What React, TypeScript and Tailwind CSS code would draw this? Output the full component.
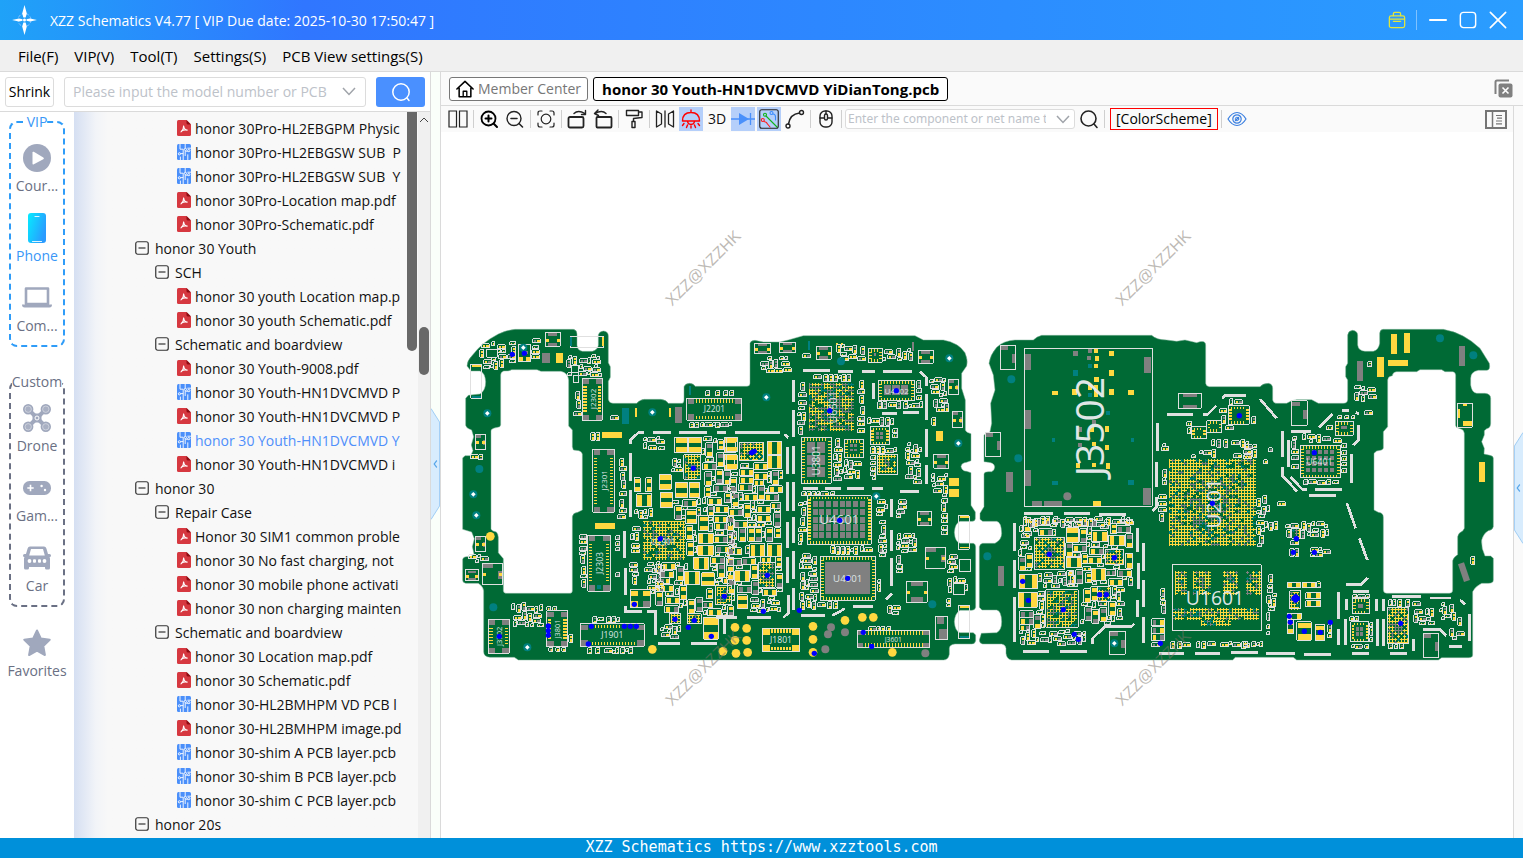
import { useState, type ReactNode } from "react";

type Box = [number, number, number, number];
type Pt = [number, number];

const GREEN = "#006a35";
const YELLOW = "#ffd840";
const GRAY = "#808080";
const TEAL = "#008080";
const SILK = "#e0e0e0";

function makeRandom(seed: number) {
  let s = seed;
  return () => {
    s = (s * 1664525 + 1013904223) % 4294967296;
    return s / 4294967296;
  };
}

const hits = (a: Box, b: Box) =>
  a[0] < b[0] + b[2] && b[0] < a[0] + a[2] && a[1] < b[1] + b[3] && b[1] < a[1] + a[3];

const rectPath = (x: number, y: number, w: number, h: number) => `M${x} ${y}h${w}v${h}h${-w}z`;

/** Fills the given regions with small two-terminal parts that never overlap. */
function packParts(regions: Box[], blocked: Box[], sizes: Pt[], seed: number, tries: number) {
  const rnd = makeRandom(seed);
  const placed: Box[] = [];
  let outline = "";
  let yellow = "";
  let gray = "";
  for (const [rx, ry, rw, rh] of regions) {
    const count = Math.max(40, Math.round((rw * rh * tries) / 1000));
    for (let i = 0; i < count; i++) {
      const size = sizes[Math.min(sizes.length - 1, Math.floor((i / count) * sizes.length))];
      const vertical = rnd() > 0.5;
      let w = vertical ? size[0] : size[1];
      let h = vertical ? size[1] : size[0];
      w = Math.min(w, Math.max(8, rw));
      h = Math.min(h, Math.max(8, rh));
      const x = Math.round((rx + rnd() * Math.max(0, rw - w)) / 3) * 3;
      const y = Math.round((ry + rnd() * Math.max(0, rh - h)) / 3) * 3;
      const b: Box = [x, y, w, h];
      if (blocked.some((o) => hits(b, o)) || placed.some((o) => hits([x - 1, y - 1, w + 2, h + 2], o))) continue;
      placed.push(b);
      outline += rectPath(x, y, w, h);
      const tone = rnd();
      const t = Math.max(3, Math.round(Math.max(w, h) * 0.3));
      const a = w >= h ? rectPath(x + 2, y + 2, t, h - 4) : rectPath(x + 2, y + 2, w - 4, t);
      const z = w >= h ? rectPath(x + w - t - 2, y + 2, t, h - 4) : rectPath(x + 2, y + h - t - 2, w - 4, t);
      if (tone < 0.36) yellow += a + z;
      else if (tone < 0.66) {
        yellow += a;
        gray += z;
      } else if (tone < 0.92) {
        gray += a;
        yellow += z;
      } else gray += a + z;
    }
  }
  return (
    <g>
      <path d={yellow} fill={YELLOW} />
      <path d={gray} fill={GRAY} />
      <path d={outline} fill="none" stroke={SILK} strokeWidth={3} />
    </g>
  );
}

/** Ball grid array drawn as touching plus marks. */
function BallGrid({
  box,
  seed,
  fill = 0.92,
  share = 0.78,
  outline = false,
}: {
  box: Box;
  seed: number;
  fill?: number;
  share?: number;
  outline?: boolean;
}) {
  const rnd = makeRandom(seed);
  const d = ["", "", ""];
  const [x0, y0, w, h] = box;
  for (let y = y0 + 6; y < y0 + h - 2; y += 9)
    for (let x = x0 + 6; x < x0 + w - 2; x += 9) {
      const mid = Math.abs(x - x0 - w / 2) < w * 0.25 && Math.abs(y - y0 - h / 2) < h * 0.25;
      if (rnd() > fill) continue;
      const r = rnd();
      const k = r < (mid ? share - 0.22 : share) ? 0 : r < 0.92 ? 1 : 2;
      d[k] += `M${x - 4} ${y}h9M${x} ${y - 4}v9`;
    }
  return (
    <g fill="none" strokeWidth={3}>
      <path d={d[2]} stroke={TEAL} />
      <path d={d[1]} stroke={GRAY} />
      <path d={d[0]} stroke={YELLOW} />
      {outline && <path d={rectPath(x0, y0, w, h)} stroke={SILK} />}
    </g>
  );
}

/** Package with perimeter pins and an optional array of ground pads. */
function Chip({ box, cols = 0, rows = 0, solid = false }: { box: Box; cols?: number; rows?: number; solid?: boolean }) {
  const [x, y, w, h] = box;
  let pins = "";
  for (let i = x + 10; i < x + w - 8; i += 9) pins += `M${i} ${y + 2}v8M${i} ${y + h - 10}v8`;
  for (let i = y + 12; i < y + h - 10; i += 9) pins += `M${x + 2} ${i}h8M${x + w - 10} ${i}h8`;
  let pads = "";
  if (solid) pads = rectPath(x + 15, y + 18, w - 32, h - 36);
  else if (cols) {
    const cw = (w - 30) / cols;
    const ch = (h - 28) / rows;
    for (let r = 0; r < rows; r++)
      for (let c = 0; c < cols; c++) pads += rectPath(x + 16 + c * cw, y + 15 + r * ch, cw - 5, ch - 5);
  }
  return (
    <g fill="none" strokeWidth={3}>
      <path d={pads} fill={GRAY} />
      <path d={pins} stroke={YELLOW} strokeWidth={4} />
      <path d={rectPath(x, y, w, h)} stroke={SILK} />
    </g>
  );
}

function Connector({ box, wide, bright }: { box: Box; wide?: boolean; bright?: boolean }) {
  const [x, y, w, h] = box;
  const c = Math.round(Math.min(w, h) * 0.3);
  let pins = "";
  if (wide) for (let i = x + c + 8; i < x + w - c - 4; i += 9) pins += `M${i} ${y + 3}v10M${i} ${y + h - 13}v10`;
  else for (let i = y + c + 8; i < y + h - c - 4; i += 9) pins += `M${x + 3} ${i}h10M${x + w - 13} ${i}h10`;
  const corners =
    rectPath(x + 2, y + 2, c, c * 0.8) +
    rectPath(x + w - c - 2, y + 2, c, c * 0.8) +
    rectPath(x + 2, y + h - c * 0.8 - 2, c, c * 0.8) +
    rectPath(x + w - c - 2, y + h - c * 0.8 - 2, c, c * 0.8);
  return (
    <g fill="none" strokeWidth={3}>
      <path d={corners} fill={bright ? YELLOW : GRAY} />
      <path d={pins} stroke={YELLOW} strokeWidth={bright ? 6 : 4} />
      <path d={rectPath(x, y, w, h)} stroke={SILK} />
    </g>
  );
}

function Capacitor({ box }: { box: Box }) {
  const [x, y, w, h] = box;
  const d =
    w > h
      ? rectPath(x + 2, y + 2, w * 0.28, h - 4) + rectPath(x + w * 0.72 - 2, y + 2, w * 0.28, h - 4)
      : rectPath(x + 2, y + 2, w - 4, h * 0.3) + rectPath(x + 2, y + h * 0.7 - 2, w - 4, h * 0.3);
  return (
    <g>
      <path d={d} fill={YELLOW} />
      <path d={rectPath(x, y, w, h)} fill="none" stroke={SILK} strokeWidth={3} />
    </g>
  );
}

function Holder({ box, plain }: { box: Box; plain?: boolean }) {
  const [x, y, w, h] = box;
  const pads =
    w >= h
      ? rectPath(x + w * 0.2, y + 2, w * 0.6, h * 0.2) + rectPath(x + w * 0.2, y + h * 0.8 - 2, w * 0.6, h * 0.2)
      : rectPath(x + 2, y + 2, w * 0.5, h * 0.18) + rectPath(x + w - w * 0.2 - 2, y + h * 0.36, w * 0.2, h * 0.36);
  const marks = rectPath(x + 2, y + h * 0.45, 8, 9) + rectPath(x + w - 10, y + h * 0.45, 8, 9);
  return (
    <g>
      <path d={pads} fill={GRAY} />
      {!plain && <path d={marks} fill={YELLOW} />}
      <path d={rectPath(x, y, w, h)} fill="none" stroke={SILK} strokeWidth={3} />
    </g>
  );
}

type Section = {
  seed: number;
  plainHolders?: boolean;
  holders?: Box[];
  frames?: Box[];
  yellow?: Box[];
  gray?: Box[];
  teal?: Box[];
  caps?: Box[];
  grids?: Box[];
  connectors?: { box: Box; wide?: boolean; bright?: boolean }[];
  chips?: { box: Box; cols?: number; rows?: number; solid?: boolean }[];
  silk: string;
  tealDots?: Pt[];
  starDots?: Pt[];
  yellowDots?: Pt[];
  grayDots?: Pt[];
  blueDots: Pt[];
  tiny: Box[];
  dense?: Box[];
  labels?: { text: string; at: Pt; size: number; rotate?: boolean }[];
};

const boxesPath = (b: Box[] = []) => b.map((r) => rectPath(...r)).join("");

function BoardSection({ s }: { s: Section }) {
  const blocked: Box[] = [
    ...(s.holders ?? []),
    ...(s.frames ?? []),
    ...(s.caps ?? []),
    ...(s.grids ?? []),
    ...(s.yellow ?? []),
    ...(s.gray ?? []),
    ...(s.connectors ?? []).map((c) => c.box),
    ...(s.chips ?? []).map((c) => c.box),
  ];
  return (
    <g>
      <g shapeRendering="crispEdges">
        <path d={boxesPath(s.gray)} fill={GRAY} />
        <path d={boxesPath(s.teal)} fill={TEAL} />
        <path d={boxesPath(s.yellow)} fill={YELLOW} />
        <path d={boxesPath(s.frames)} fill="none" stroke={SILK} strokeWidth={3} />
        {s.holders?.map((b, i) => <Holder key={i} box={b} plain={s.plainHolders} />)}
        {s.caps?.map((b, i) => <Capacitor key={i} box={b} />)}
        {s.connectors?.map((c, i) => <Connector key={i} {...c} />)}
        {s.chips?.map((c, i) => <Chip key={i} {...c} />)}
        {s.grids?.map((b, i) => (
          <BallGrid key={i} box={b} seed={s.seed + i} outline={b[2] < 120} share={b[2] > 140 && b[2] < 200 ? 0.58 : 0.78} />
        ))}
        {packParts(s.dense ?? [], blocked, [[20, 40], [16, 30], [12, 24], [9, 18], [9, 12]], s.seed, 45)}
        {packParts(s.tiny, blocked, [[12, 22], [9, 18], [9, 12], [8, 9]], s.seed + 7, 50)}
        <path d={s.silk} fill="none" stroke={SILK} strokeWidth={8} />
      </g>
      {s.tealDots?.map(([x, y], i) => <circle key={i} cx={x} cy={y} r={12} fill={TEAL} />)}
      {s.starDots?.map(([x, y], i) => (
        <g key={i}>
          <circle cx={x} cy={y} r={12} fill={TEAL} />
          <path d={`M${x} ${y - 7}l7 7l-7 7l-7 -7z`} fill="#fff" />
        </g>
      ))}
      {s.yellowDots?.map(([x, y], i) => <circle key={i} cx={x} cy={y} r={13} fill={YELLOW} />)}
      {s.grayDots?.map(([x, y], i) => <circle key={i} cx={x} cy={y} r={12} fill={GRAY} />)}
      {s.labels?.map(({ text, at, size, rotate }, i) => (
        <text
          key={i}
          fontSize={size}
          fill="#dfe6e6"
          textAnchor="middle"
          dominantBaseline="central"
          transform={`translate(${at[0]} ${at[1]})${rotate ? " rotate(-90)" : ""}`}
        >
          {text}
        </text>
      ))}
      {s.blueDots.map(([x, y], i) => <circle key={i} cx={x} cy={y} r={8} fill="#0000ff" />)}
    </g>
  );
}

const frontLeft: Section = {
  seed: 11,
  holders: [[271, 37, 45, 42], [61, 343, 31, 45], [61, 649, 31, 45], [31, 750, 40, 32], [82, 730, 60, 64]],
  frames: [[190, 73, 37, 52], [95, 88, 32, 24], [349, 138, 22, 20], [356, 166, 16, 22], [526, 810, 60, 52]],
  yellow: [[303, 99, 20, 29], [441, 336, 60, 18], [420, 609, 60, 18], [540, 263, 6, 28], [642, 263, 6, 28], [441, 52, 6, 27], [192, 112, 12, 12], [212, 112, 12, 12], [528, 812, 20, 16], [564, 812, 20, 16], [528, 842, 20, 18], [51, 135, 27, 6]],
  gray: [[261, 99, 24, 29], [660, 261, 21, 47], [200, 92, 18, 10], [564, 842, 20, 18]],
  teal: [[500, 263, 22, 48], [346, 52, 5, 26], [701, 197, 6, 28], [426, 795, 12, 12], [51, 228, 27, 6]],
  caps: [[660, 352, 38, 46], [701, 352, 38, 46], [808, 352, 34, 46], [613, 464, 36, 44], [545, 522, 45, 38], [616, 518, 37, 44], [661, 488, 37, 46], [703, 488, 31, 46], [808, 404, 30, 46], [693, 570, 32, 42], [732, 588, 28, 44], [730, 640, 45, 30], [728, 676, 47, 30], [716, 712, 45, 36], [688, 755, 46, 40], [740, 758, 38, 40], [746, 892, 44, 66], [538, 474, 18, 42], [573, 474, 18, 42]],
  grids: [[562, 600, 128, 120], [687, 404, 50, 74], [783, 798, 47, 56], [645, 880, 32, 32], [697, 882, 42, 30]],
  connectors: [
    { box: [382, 175, 60, 126] },
    { box: [696, 235, 165, 66], wide: true },
    { box: [414, 388, 64, 189] },
    { box: [399, 646, 67, 168] },
    { box: [100, 898, 63, 102] },
    { box: [275, 873, 63, 107] },
    { box: [376, 912, 192, 67], wide: true },
  ],
  silk: "M527 372V360L550 338H567M595 338H648M672 338H755M785 338H812M527 400V482M527 510V592M509 634V715M512 745V825M512 858V874H560M575 874H602V944M608 970H675M708 970H785M808 893V942",
  tealDots: [[73, 447], [115, 862]],
  starDots: [[97, 280], [592, 277], [55, 523], [64, 586], [217, 982], [205, 83]],
  yellowDots: [[106, 649], [592, 988], [804, 994]],
  blueDots: [[172, 103], [208, 100], [715, 445], [616, 656], [538, 853], [660, 898], [718, 901], [808, 829], [700, 922], [769, 949], [133, 949], [409, 919], [508, 919], [526, 919], [544, 919], [400, 972], [280, 918], [280, 932], [280, 946]],
  tiny: [[75, 65, 80, 85], [160, 65, 25, 65], [230, 55, 28, 70], [334, 105, 105, 68], [358, 205, 22, 85], [494, 415, 20, 170], [376, 632, 20, 180], [484, 640, 12, 55], [484, 750, 12, 25], [172, 850, 95, 72], [275, 860, 40, 10], [280, 985, 55, 10], [342, 935, 20, 40], [412, 890, 85, 18], [388, 985, 155, 18], [745, 213, 95, 14], [700, 308, 130, 14], [400, 335, 35, 32], [48, 405, 38, 15], [30, 705, 70, 22], [468, 283, 24, 22], [486, 545, 28, 60], [565, 350, 65, 40], [528, 620, 32, 90], [525, 725, 28, 75], [570, 725, 60, 100], [540, 565, 60, 32], [618, 915, 62, 42], [650, 415, 32, 55]],
  dense: [[742, 350, 98, 540], [650, 530, 90, 68], [692, 600, 50, 110], [600, 725, 100, 140], [620, 835, 130, 45]],
  labels: [
    { text: "J2302", at: [414, 237], size: 24, rotate: true },
    { text: "J2201", at: [778, 267], size: 25 },
    { text: "J2301", at: [447, 481], size: 24, rotate: true },
    { text: "J2303", at: [434, 729], size: 26, rotate: true },
    { text: "J3702", at: [132, 949], size: 23, rotate: true },
    { text: "J3801", at: [306, 927], size: 22, rotate: true },
    { text: "J1901", at: [472, 945], size: 26 },
    { text: "U2901", at: [624, 664], size: 25 },
  ],
};

const frontRight: Section = {
  seed: 37,
  holders: [[73, 70, 48, 31], [148, 67, 48, 31], [259, 79, 45, 39], [565, 91, 45, 39], [655, 178, 31, 45], [667, 275, 31, 47], [611, 403, 45, 42], [562, 574, 43, 42], [586, 682, 60, 63], [529, 784, 63, 63]],
  frames: [[616, 889, 37, 70], [688, 720, 35, 35], [670, 790, 35, 35]],
  yellow: [[617, 334, 21, 28], [656, 475, 31, 23], [656, 508, 31, 23], [690, 588, 26, 5], [690, 680, 26, 5], [690, 858, 26, 5], [318, 69, 6, 6], [332, 69, 6, 6]],
  gray: [[546, 66, 6, 27], [621, 892, 20, 20], [626, 926, 24, 30]],
  teal: [[234, 64, 6, 26], [690, 948, 26, 6]],
  caps: [[112, 364, 44, 40], [112, 406, 44, 40], [-10, 352, 32, 44], [-10, 404, 32, 44], [60, 672, 44, 38], [112, 672, 44, 38], [14, 752, 46, 32], [22, 825, 30, 42]],
  grids: [[234, 188, 142, 152], [443, 404, 60, 60], [28, 367, 73, 55], [86, 727, 50, 75]],
  connectors: [{ box: [97, 925, 112, 69], wide: true, bright: true }, { box: [382, 931, 216, 52], wide: true }],
  chips: [
    { box: [445, 181, 109, 62], cols: 3, rows: 1 },
    { box: [214, 352, 90, 138], cols: 2, rows: 3 },
    { box: [343, 358, 58, 54], cols: 2, rows: 2 },
    { box: [421, 321, 58, 54], cols: 2, rows: 2 },
    { box: [415, 85, 42, 42], cols: 1, rows: 1 },
    { box: [232, 528, 192, 145], cols: 8, rows: 5 },
    { box: [271, 709, 165, 132], solid: true },
  ],
  silk: "M219 152H300M325 155H368M397 155H435M460 155H547M570 155L589 172V197M190 180V246M190 270V352M190 378V463M190 485V572M190 590V670M190 694V777M190 804V870M173 382V463M173 485V572M173 605V685M173 712V790M176 825V878L160 893M14 338H150M163 343L175 353M431 190V238M589 222V300M589 327V412M589 436V492M455 281H500M520 277H567M220 505H265M285 505H332M352 505H403M427 505H460M510 514H567M484 538V590M484 630V692M484 714V797M468 838L487 821M370 859H430M212 886H285M307 886L345 866M50 892H122M-42 892H22",
  tealDots: [[333, 124], [607, 853]],
  starDots: [[658, 115], [109, 232], [685, 370], [439, 529]],
  yellowDots: [[15, 922], [50, 925], [15, 961], [50, 961], [18, 1000], [53, 997], [249, 919], [249, 958], [249, 997], [345, 901], [397, 892], [430, 892], [487, 997]],
  grayDots: [[303, 922], [294, 943], [345, 937], [286, 988], [586, 1000]],
  blueDots: [[299, 272], [499, 212], [329, 601], [353, 775], [65, 398], [73, 394], [112, 766], [100, 874], [208, 871], [253, 1000], [400, 937], [425, 979]],
  tiny: [[90, 110, 95, 50], [210, 100, 35, 20], [320, 75, 90, 50], [460, 85, 90, 40], [205, 180, 25, 120], [250, 165, 120, 20], [385, 180, 20, 160], [205, 300, 20, 48], [440, 246, 140, 20], [560, 180, 15, 70], [600, 170, 50, 60], [610, 235, 48, 45], [605, 290, 15, 25], [410, 293, 85, 22], [310, 350, 28, 140], [340, 416, 55, 64], [412, 380, 90, 20], [423, 405, 15, 80], [488, 325, 15, 40], [525, 370, 50, 125], [605, 460, 50, 60], [635, 520, 18, 130], [205, 515, 110, 12], [205, 545, 25, 130], [440, 540, 35, 50], [500, 535, 32, 60], [445, 600, 25, 115], [500, 640, 65, 60], [500, 700, 18, 60], [300, 678, 130, 25], [210, 700, 55, 170], [445, 780, 8, 35], [250, 845, 80, 20], [470, 853, 45, 35], [650, 700, 35, 60], [655, 770, 60, 60], [650, 830, 12, 30], [410, 920, 80, 10], [60, 830, 95, 50]],
  dense: [[-10, 425, 170, 245], [-10, 672, 170, 155]],
  labels: [
    { text: "U6501", at: [310, 262], size: 32, rotate: true },
    { text: "U4802", at: [500, 212], size: 24 },
    { text: "U3801", at: [259, 421], size: 30, rotate: true },
    { text: "U4601", at: [328, 597], size: 40 },
    { text: "U4901", at: [353, 775], size: 29 },
    { text: "J1801", at: [153, 961], size: 26 },
    { text: "J3601", at: [490, 958], size: 20 },
  ],
};

const backLeft: Section = {
  seed: 59,
  plainHolders: true,
  holders: [[91, 76, 45, 73], [46, 337, 45, 73], [625, 220, 69, 45], [418, 934, 48, 69]],
  frames: [[163, 85, 384, 474], [607, 734, 267, 198]],
  yellow: [[372, 87, 12, 12], [375, 109, 12, 13], [417, 93, 15, 14], [372, 131, 12, 13], [417, 150, 15, 17], [372, 170, 15, 15], [246, 212, 18, 13], [306, 207, 15, 18], [372, 195, 12, 35], [354, 195, 12, 14], [417, 207, 15, 17], [474, 210, 18, 15], [405, 318, 12, 17], [405, 375, 12, 15], [360, 320, 12, 15], [366, 366, 12, 12], [408, 429, 12, 17], [318, 430, 12, 14], [366, 430, 12, 12], [369, 543, 24, 15]],
  gray: [[309, 93, 15, 14], [354, 87, 12, 12], [351, 108, 12, 12], [163, 102, 20, 48], [522, 111, 21, 48], [163, 270, 20, 56], [163, 450, 20, 48], [519, 504, 24, 50], [186, 543, 30, 15], [222, 543, 54, 15], [108, 456, 21, 60], [84, 738, 18, 60], [321, 320, 15, 15], [366, 300, 12, 12], [325, 370, 12, 10]],
  teal: [[309, 150, 15, 17], [354, 132, 12, 12], [408, 273, 12, 11], [246, 354, 10, 11], [483, 354, 9, 11], [246, 483, 18, 12], [474, 480, 18, 15], [354, 220, 12, 12], [360, 447, 12, 11]],
  caps: [[289, 622, 37, 46], [366, 633, 46, 32], [417, 646, 46, 32], [289, 712, 46, 30], [364, 745, 44, 38], [148, 763, 54, 44], [145, 818, 57, 44], [468, 700, 20, 45]],
  grids: [[594, 416, 264, 264], [193, 652, 90, 98], [228, 810, 97, 112], [407, 688, 54, 46], [383, 800, 38, 45]],
  chips: [{ box: [775, 258, 63, 55] }, { box: [664, 321, 45, 36] }, { box: [711, 302, 45, 36] }],
  silk: "M163 580H248M281 580H360M388 583H468M133 610V692M133 720V803M133 832V967M160 994H237M270 994H350M503 625V697M506 730V808M503 840V890M520 670V752M520 780V862M520 892V970M560 530V560L547 573M560 427V502M562 310V392M590 283H668M700 283H713L738 258M757 236L765 226H828M368 973V955L405 919H485L492 912M566 1000H642M676 1000H750M784 997H865",
  tealDots: [[124, 178], [145, 415], [52, 709]],
  starDots: [[433, 970]],
  grayDots: [[292, 529]],
  blueDots: [[808, 287], [727, 550], [238, 703], [433, 713], [158, 784], [175, 841], [389, 824], [409, 824], [280, 869], [313, 943], [325, 958], [571, 970]],
  tiny: [[650, 305, 14, 40], [750, 260, 20, 60], [760, 316, 40, 16], [720, 360, 120, 25], [575, 370, 20, 28], [780, 235, 40, 20], [580, 445, 12, 50], [565, 520, 25, 90], [572, 800, 15, 85], [600, 965, 60, 20], [680, 965, 60, 20], [745, 965, 95, 20], [790, 395, 60, 20], [665, 405, 10, 8], [690, 385, 50, 28], [160, 590, 330, 32], [150, 640, 35, 50], [150, 928, 200, 50], [200, 755, 125, 50], [440, 800, 22, 100], [205, 810, 20, 60]],
  dense: [[150, 590, 115, 58], [145, 690, 45, 65], [285, 600, 205, 200], [330, 800, 110, 115], [145, 870, 80, 65], [545, 885, 38, 95]],
  labels: [
    { text: "J3502", at: [357, 320], size: 117, rotate: true },
    { text: "U201", at: [730, 550], size: 62, rotate: true },
    { text: "U1601", at: [735, 832], size: 58 },
  ],
};

const backRight: Section = {
  seed: 83,
  plainHolders: true,
  holders: [[154, 243, 48, 73], [550, 940, 45, 73]],
  frames: [[652, 250, 45, 72]],
  yellow: [[453, 42, 18, 60], [492, 39, 18, 60], [411, 110, 21, 60], [444, 120, 60, 18], [717, 426, 18, 60], [669, 252, 12, 6], [654, 267, 7, 27], [669, 303, 27, 14]],
  gray: [[351, 123, 18, 60], [657, 78, 18, 59]],
  caps: [[171, 906, 43, 55], [226, 915, 28, 46], [142, 787, 40, 17], [187, 787, 40, 17], [198, 818, 45, 18], [198, 842, 45, 18], [142, 880, 42, 18], [142, 900, 18, 42]],
  grids: [[442, 862, 65, 108], [149, 813, 34, 54], [155, 625, 28, 30]],
  chips: [
    { box: [286, 304, 54, 42], cols: 1, rows: 1 },
    { box: [181, 376, 120, 98], cols: 5, rows: 4 },
    { box: [337, 836, 51, 46], cols: 1, rows: 1 },
    { box: [333, 906, 54, 60], cols: 2, rows: 2 },
  ],
  silk: "M60 237L110 295M237 322L278 282M306 271H328M347 277L357 283M355 316V360L340 376M157 338V334H212M127 334V412M145 361V442M127 442V467L172 515M152 472L187 508H200M225 508H305M207 526H287M334 403V488M321 550L347 625M358 655L382 720M318 794H363L383 773M340 815H386M296 816V896M296 928V976M319 836V871M316 898V976M410 838V872M431 838V872M413 898V978M431 898V978M457 829H543M570 834H632M660 840L675 853M688 883V962M550 929H600L619 947M628 979H665M520 958V992M450 1000H500M337 1000H386M193 1003H272M78 1000H165M0 226H18",
  tealDots: [[600, 55], [700, 106]],
  blueDots: [[223, 398], [169, 656], [160, 697], [223, 697], [148, 889], [151, 907], [193, 934], [241, 937], [271, 907], [482, 910], [167, 830], [167, 840], [162, 835], [172, 835]],
  tiny: [[340, 198, 70, 48], [385, 125, 12, 15], [372, 268, 28, 22], [285, 288, 60, 9], [262, 312, 18, 20], [187, 342, 90, 26], [155, 350, 20, 110], [305, 368, 15, 100], [190, 480, 110, 14], [282, 356, 30, 12], [36, 290, 15, 20], [5, 372, 45, 45], [88, 378, 10, 25], [73, 420, 10, 12], [50, 525, 40, 70], [110, 542, 28, 28], [50, 600, 25, 80], [70, 605, 45, 30], [137, 605, 130, 50], [148, 660, 30, 50], [210, 683, 62, 30], [84, 762, 14, 60], [80, 822, 35, 50], [80, 870, 9, 75], [232, 785, 10, 18], [265, 905, 12, 55], [8, 965, 60, 14], [338, 824, 55, 9], [330, 890, 35, 12], [335, 974, 60, 10], [390, 905, 8, 65], [448, 840, 100, 20], [515, 865, 70, 50], [600, 848, 50, 55], [645, 885, 30, 35], [628, 925, 50, 35], [445, 972, 55, 14], [693, 710, 16, 26]],
  labels: [{ text: "U6401", at: [238, 427], size: 26 }],
};

const FRONT_OUTLINE =
  "M36 138Q36 122 52 106Q80 68 130 42Q155 30 180 28H355Q366 30 366 42V76Q368 92 382 94H412Q428 90 430 76V44Q434 33 446 33Q460 35 460 48V128L466 140V172L460 184V238Q462 250 474 250H545Q555 239 568 238H618Q634 240 640 250H680Q687 250 687 240V200Q692 190 704 190Q717 191 720 199H876Q885 199 885 190V70Q887 61 900 61L925 66H975L1000 60L1045 47H1380L1405 60H1465Q1510 68 1530 98Q1540 120 1535 138L1520 160V205L1531 240V330Q1533 338 1548 341V422L1535 427Q1520 428 1518 440Q1522 454 1535 454L1548 458V556L1561 576V596Q1560 604 1550 604H1515Q1500 610 1498 637Q1500 666 1515 670H1555Q1562 672 1562 680V862Q1560 871 1550 871H1515Q1500 880 1498 905Q1500 934 1515 938H1555L1562 945V962Q1560 972 1550 972H1500Q1483 974 1483 985V1003Q1480 1020 1466 1020H190L178 1012H105Q86 1010 86 995V812Q84 798 70 790H32Q23 788 23 780V718Q25 710 34 710H48L57 702L52 680L58 656L50 636L23 628V414L30 407H47L54 392L49 375L56 350L50 330Q34 326 32 316V235L40 226L75 222Q92 212 92 185Q90 158 75 153H48Z" +
  "M137 165V315Q136 322 128 322Q110 324 108 332V628Q112 634 124 636Q130 642 130 652V698L145 716V812Q146 820 154 820H344Q352 820 352 812V590Q354 578 368 577L382 570V402Q380 394 372 392L355 390L352 380V330L341 318V180Q338 158 318 154H258L246 149H170Q162 154 146 153Q137 156 137 165Z";

const BACK_OUTLINE =
  "M57 130Q60 105 80 82Q100 62 135 60H190Q200 50 215 46H545Q560 60 590 60L620 64L645 60L680 68Q707 58 707 75V190Q709 200 718 200H870Q880 190 895 190Q908 192 908 205V240Q910 250 920 250H950Q965 240 980 239H1025L1045 250H1120Q1133 250 1133 238V180L1127 170V140L1133 130V45Q1135 32 1148 31Q1162 33 1163 45V75Q1165 92 1185 94H1210Q1226 90 1229 70V40Q1230 28 1240 28H1420Q1480 38 1530 85L1558 130Q1562 150 1550 151H1525Q1502 155 1502 175V195Q1505 218 1520 220H1545Q1562 222 1562 235V310Q1562 325 1550 326L1543 332V345L1535 365L1543 385L1542 402L1560 406Q1570 408 1570 415V620Q1568 630 1555 632Q1540 640 1535 660Q1533 685 1545 708H1562L1570 715V780Q1570 790 1555 790H1535Q1515 800 1508 815V1005Q1508 1013 1495 1013H1415L1405 1020H980L970 1012H796L788 1020H125Q110 1018 108 1000V985Q106 973 95 972H38Q28 970 28 960L34 940L80 938Q95 930 95 905Q94 872 80 870H36L28 862V680Q30 671 38 670H75Q95 660 95 640Q94 606 80 604H38L30 598V580L42 560V462Q43 455 55 455H65Q75 450 74 440Q72 428 55 427L42 425V345L60 335L65 310L62 250L75 210L70 165Z" +
  "M1253 180V320L1240 335V385Q1238 392 1220 393L1212 400V570L1225 577Q1240 578 1240 592V810Q1241 820 1250 820H1438Q1448 820 1448 810V722Q1450 712 1463 704V650Q1465 638 1478 633L1483 625V340Q1482 328 1470 326Q1457 324 1457 316V165Q1456 156 1448 155H1425L1415 149H1350L1340 155H1280Q1268 156 1267 167Q1254 168 1253 180Z";

function PcbBoard() {
  return (
    <svg
      viewBox="441 132 1072 706"
      className="h-full w-full font-['Open_Sans',sans-serif]"
      role="img"
      aria-label="PCB front and back layers"
    >
      <g transform="translate(455 320) scale(0.33333)">
        <path d={FRONT_OUTLINE} fill={GREEN} fillRule="evenodd" stroke="#7fb49a" strokeWidth={1.5} />
        <g fill="none" stroke={SILK} strokeWidth={3} shapeRendering="crispEdges">
          <path d="M346 49h101v33h-101zM48 133h32v102h-32zM1510 588h33v100h-33zM1510 856h33v100h-33z" />
        </g>
        <BoardSection s={frontLeft} />
        <g transform="translate(825 0)">
          <BoardSection s={frontRight} />
        </g>
      </g>
      <g transform="translate(970 320) scale(0.33333)">
        <path d={BACK_OUTLINE} fill={GREEN} fillRule="evenodd" stroke="#7fb49a" strokeWidth={1.5} />
        <g shapeRendering="crispEdges">
          <BallGrid box={[612, 752, 36, 76]} seed={3} />
          <BallGrid box={[666, 752, 56, 76]} seed={4} />
          <BallGrid box={[758, 752, 46, 76]} seed={5} />
          <BallGrid box={[826, 752, 46, 76]} seed={6} />
          <BallGrid box={[603, 862, 262, 42]} seed={7} fill={0.95} />
          <BallGrid box={[690, 898, 90, 22]} seed={8} />
        </g>
        <BoardSection s={backLeft} />
        <g transform="translate(810 0)">
          <BoardSection s={backRight} />
          <path d="M654 733l18 -6l18 53l-18 6z" fill={GRAY} />
        </g>
      </g>
      <g fontSize={16} fill="#7d766c" fillOpacity={0.5} textAnchor="middle" className="font-['Liberation_Sans',sans-serif]">
        {[703, 1153].map((x) =>
          [268, 668].map((y) => (
            <text key={`${x}-${y}`} transform={`translate(${x} ${y}) rotate(-45)`} dominantBaseline="central">
              XZZ@XZZHK
            </text>
          )),
        )}
      </g>
    </svg>
  );
}

/* ---------- icons ---------- */

function Icon({ size = 20, children, className = "text-[#222]" }: { size?: number; children: ReactNode; className?: string }) {
  return (
    <svg
      width={size}
      height={size}
      viewBox="0 0 20 20"
      fill="none"
      stroke="currentColor"
      strokeWidth={1.4}
      strokeLinecap="round"
      strokeLinejoin="round"
      className={className}
      aria-hidden="true"
    >
      {children}
    </svg>
  );
}

const PdfIcon = () => (
  <svg width="14" height="16" viewBox="0 0 14 16" aria-hidden="true" className="shrink-0">
    <path d="M1.500 0H9.500L14 4.500V14.500Q14 16 12.500 16H1.500Q0 16 0 14.500V1.500Q0 0 1.500 0Z" fill="#d63840" />
    <path d="M9.500 0V3Q9.500 4.500 11 4.500H14Z" fill="#8e0d14" />
    <path d="M6.600 6C6.700 8.200 5.600 10.600 4 11.900M6.700 6C6.800 7.800 8.200 9.700 10.200 10.100M4.600 11C6 10 8.200 9.600 10.200 10.100" fill="none" stroke="#fff" strokeWidth="1.100" strokeLinecap="round" />
  </svg>
);

const PcbIcon = () => (
  <svg width="14" height="16" viewBox="0 0 14 16" aria-hidden="true" className="shrink-0">
    <rect width="14" height="16" rx="1.500" fill="#4a8ffa" />
    <g fill="none" stroke="#fff" strokeWidth="0.900">
      <path d="M3 0V5.200H6.200V16M8.200 0V4.400M8.200 7.200V12M8.200 7.200H11M3.600 9.600H6.200M3.400 16V12.600M10.800 16V10.400M10.400 4.200H14" />
      <circle cx="8.400" cy="5.400" r="1.100" />
      <circle cx="2.400" cy="9.800" r="1.100" />
      <circle cx="11.800" cy="6.600" r="1.100" />
    </g>
  </svg>
);

const CollapseIcon = () => (
  <svg width="14" height="14" viewBox="0 0 14 14" aria-hidden="true" className="shrink-0">
    <rect x="0.750" y="0.750" width="12.500" height="12.500" rx="2" fill="none" stroke="#333" strokeWidth="1.200" />
    <path d="M3.500 7H10.500" stroke="#333" strokeWidth="1.200" />
  </svg>
);

const Chevron = () => (
  <svg width="14" height="9" viewBox="0 0 14 9" fill="none" stroke="#a0a4aa" strokeWidth="1.500" aria-hidden="true">
    <path d="M1 1L7 7.500L13 1" />
  </svg>
);

const categoryIcons: Record<string, ReactNode> = {
  course: (
    <svg width="28" height="28" viewBox="0 0 28 28" aria-hidden="true">
      <circle cx="14" cy="14" r="14" fill="#a0a8bd" />
      <path d="M9.500 8.500V19.500Q9.500 20.800 10.800 20.200L20.300 15.200Q21.600 14.300 20.300 13.400L10.800 7.800Q9.500 7.300 9.500 8.500Z" fill="#fff" />
    </svg>
  ),
  phone: (
    <svg width="18" height="30" viewBox="0 0 18 30" aria-hidden="true">
      <defs>
        <linearGradient id="phoneFill" x1="0" x2="1" y1="0" y2="0.500">
          <stop offset="0" stopColor="#06ecff" />
          <stop offset="1" stopColor="#2a9bff" />
        </linearGradient>
      </defs>
      <rect width="18" height="30" rx="3" fill="url(#phoneFill)" />
      <path d="M7 3.500H11M4.500 28.500H13.500" stroke="#dff6ff" strokeWidth="1.200" strokeLinecap="round" />
    </svg>
  ),
  computer: (
    <svg width="30" height="22" viewBox="0 0 30 22" aria-hidden="true">
      <path d="M4 1.500H26V17H4Z" fill="none" stroke="#a0a8bd" strokeWidth="2.600" strokeLinejoin="round" />
      <path d="M0 17.500H30Q30 20.500 27.500 20.500H2.500Q0 20.500 0 17.500Z" fill="#a0a8bd" />
    </svg>
  ),
  drone: (
    <svg width="28" height="28" viewBox="0 0 28 28" aria-hidden="true">
      <path d="M5 5L12 12M23 5L16 12M5 23L12 16M23 23L16 16" stroke="#a0a8bd" strokeWidth="4" />
      <rect x="9.500" y="9.500" width="9" height="9" rx="3" fill="#a0a8bd" />
      <g fill="#a9b0c3" stroke="#a0a8bd" strokeWidth="2">
        <circle cx="5.200" cy="5.200" r="4.200" />
        <circle cx="22.800" cy="5.200" r="4.200" />
        <circle cx="5.200" cy="22.800" r="4.200" />
        <circle cx="22.800" cy="22.800" r="4.200" />
      </g>
      <g fill="none" stroke="#d5d9e2" strokeWidth="0.800">
        <circle cx="5.200" cy="5.200" r="3.200" />
        <circle cx="22.800" cy="5.200" r="3.200" />
        <circle cx="5.200" cy="22.800" r="3.200" />
        <circle cx="22.800" cy="22.800" r="3.200" />
      </g>
      <circle cx="14" cy="14" r="2" fill="none" stroke="#fff" strokeWidth="1" />
    </svg>
  ),
  game: (
    <svg width="28" height="14" viewBox="0 0 28 14" aria-hidden="true">
      <rect width="28" height="14" rx="6.500" fill="#a0a8bd" />
      <path d="M7.500 3.800V10.200M4.300 7H10.700" stroke="#fff" strokeWidth="1.600" />
      <circle cx="18.600" cy="5" r="1.200" fill="#fff" />
      <circle cx="22" cy="9" r="1.200" fill="#fff" />
    </svg>
  ),
  car: (
    <svg width="28" height="24" viewBox="0 0 28 24" aria-hidden="true">
      <path
        d="M7 0.500H21Q22.800 0.500 23.400 2.500L25 8H26.500Q28 8 28 9.500Q28 11 26.600 11L27 12.500V22Q27 23.500 25.500 23.500H23.500Q22 23.500 22 22V21H6V22Q6 23.500 4.500 23.500H2.500Q1 23.500 1 22V12.500L1.400 11Q0 11 0 9.500Q0 8 1.500 8H3L4.600 2.500Q5.200 0.500 7 0.500ZM8 3L6.200 9.500H21.800L20 3Z"
        fill="#a0a8bd"
        fillRule="evenodd"
      />
      <g fill="#fff">
        <circle cx="6.500" cy="15" r="1.900" />
        <circle cx="21.500" cy="15" r="1.900" />
        <rect x="10" y="13.200" width="3" height="3.600" rx="1" />
        <rect x="15" y="13.200" width="3" height="3.600" rx="1" />
      </g>
    </svg>
  ),
  star: (
    <svg width="28" height="28" viewBox="0 0 28 28" aria-hidden="true">
      <path
        d="M14 1.500L17.900 9.600L26.700 10.800L20.300 17L21.900 26L14 21.700L6.100 26L7.700 17L1.300 10.800L10.100 9.600Z"
        fill="#a0a8bd"
        stroke="#a0a8bd"
        strokeWidth="2"
        strokeLinejoin="round"
      />
    </svg>
  ),
};

function Category({ icon, label, active }: { icon: string; label: string; active?: boolean }) {
  return (
    <button className={`flex h-[70px] w-full flex-col items-center pt-2 ${active ? "text-[#3a97f7]" : "text-[#6a7084]"}`}>
      <span className="flex h-9 items-center">{categoryIcons[icon]}</span>
      <span className="h-5 text-sm leading-5">{label}</span>
    </button>
  );
}

/* ---------- tree ---------- */

type Row = { kind: "model" | "folder" | "pdf" | "pcb"; name: string; selected?: boolean };

const rows: Row[] = [
  { kind: "pdf", name: "honor 30Pro-HL2EBGPM Physic" },
  { kind: "pcb", name: "honor 30Pro-HL2EBGSW SUB  P" },
  { kind: "pcb", name: "honor 30Pro-HL2EBGSW SUB  Y" },
  { kind: "pdf", name: "honor 30Pro-Location map.pdf" },
  { kind: "pdf", name: "honor 30Pro-Schematic.pdf" },
  { kind: "model", name: "honor 30 Youth" },
  { kind: "folder", name: "SCH" },
  { kind: "pdf", name: "honor 30 youth Location map.p" },
  { kind: "pdf", name: "honor 30 youth Schematic.pdf" },
  { kind: "folder", name: "Schematic and boardview" },
  { kind: "pdf", name: "honor 30 Youth-9008.pdf" },
  { kind: "pcb", name: "honor 30 Youth-HN1DVCMVD P" },
  { kind: "pdf", name: "honor 30 Youth-HN1DVCMVD P" },
  { kind: "pcb", name: "honor 30 Youth-HN1DVCMVD Y", selected: true },
  { kind: "pdf", name: "honor 30 Youth-HN1DVCMVD i" },
  { kind: "model", name: "honor 30" },
  { kind: "folder", name: "Repair Case" },
  { kind: "pdf", name: "Honor 30 SIM1 common proble" },
  { kind: "pdf", name: "honor 30 No fast charging, not" },
  { kind: "pdf", name: "honor 30 mobile phone activati" },
  { kind: "pdf", name: "honor 30 non charging mainten" },
  { kind: "folder", name: "Schematic and boardview" },
  { kind: "pdf", name: "honor 30 Location map.pdf" },
  { kind: "pdf", name: "honor 30 Schematic.pdf" },
  { kind: "pcb", name: "honor 30-HL2BMHPM VD PCB l" },
  { kind: "pdf", name: "honor 30-HL2BMHPM image.pd" },
  { kind: "pcb", name: "honor 30-shim A PCB layer.pcb" },
  { kind: "pcb", name: "honor 30-shim B PCB layer.pcb" },
  { kind: "pcb", name: "honor 30-shim C PCB layer.pcb" },
  { kind: "model", name: "honor 20s" },
];

const indent = { model: "pl-[61px] gap-1.5", folder: "pl-[81px] gap-1.5", pdf: "pl-[103px] gap-1", pcb: "pl-[103px] gap-1" };

function FileTree() {
  return (
    <div className="flex min-w-0 flex-1 bg-[#f8f8f8]">
      <ul className="min-w-0 flex-1 overflow-hidden bg-linear-to-r from-[#d5dff2] via-[#f2f4f8] via-[22px] to-[#f8f8f8] to-[34px] pt-1">
        {rows.map((row, i) => (
          <li key={i}>
            <button
              className={`flex h-6 w-full items-center text-sm whitespace-pre ${indent[row.kind]} ${row.selected ? "text-[#4f8ffb]" : "text-[#111]"}`}
            >
              {row.kind === "pdf" ? <PdfIcon /> : row.kind === "pcb" ? <PcbIcon /> : <CollapseIcon />}
              <span className="pt-0.5">{row.name}</span>
            </button>
          </li>
        ))}
      </ul>
      <div className="w-3 pl-px">
        <div className="h-[239px] w-2.5 rounded-b-full bg-[#686868]" />
      </div>
      <div className="flex w-3 flex-col items-center bg-[#f0f0f0] pt-[5px]">
        <svg width="10" height="6" viewBox="0 0 10 6" fill="none" stroke="#444" aria-hidden="true">
          <path d="M1 5L5 1L9 5" />
        </svg>
        <div className="mt-[204px] h-12 w-2.5 rounded-full bg-[#686868]" />
      </div>
    </div>
  );
}

function DrawerHandle({ label, side }: { label: string; side: "left" | "right" }) {
  return (
    <button aria-label={label} className={side === "left" ? "mt-[336px] h-28 w-full" : "mt-[326px] h-28 w-full"}>
      <svg viewBox="0 0 10 112" preserveAspectRatio="none" className="h-full w-full" aria-hidden="true">
        {side === "left" ? (
          <path d="M0 0.500L9.500 14V98L0 111.500" fill="#d8ecfd" stroke="#9ccbf4" />
        ) : (
          <path d="M10 0.500L0.500 14V98L10 111.500" fill="#d8ecfd" stroke="#9ccbf4" />
        )}
        <path d="M6.500 52.500L3.500 56L6.500 59.500" fill="none" stroke="#58a6ea" strokeWidth="1.200" />
      </svg>
    </button>
  );
}

/* ---------- toolbar ---------- */

function Tool({ label, active, children }: { label: string; active?: boolean; children: ReactNode }) {
  return (
    <button
      aria-label={label}
      title={label}
      className={`flex h-6 w-6 shrink-0 items-center justify-center text-sm ${active ? "bg-[#b5cffa]" : ""}`}
    >
      {children}
    </button>
  );
}

const Divider = () => <span className="mx-px h-[18px] w-px shrink-0 bg-[#cfcfcf]" />;

function Toolbar() {
  return (
    <div className="flex h-[26px] items-center gap-0.5 bg-[#fafafa] pr-1.5 pl-[5px]">
      <Tool label="Split view">
        <Icon>
          <path d="M1 2H8.500V18H1ZM11.500 2H19V18H11.500Z" strokeWidth={1.2} strokeLinejoin="miter" />
        </Icon>
      </Tool>
      <Divider />
      <Tool label="Zoom in">
        <Icon className="text-black">
          <circle cx="9.500" cy="9.500" r="7" strokeWidth={1.8} />
          <path d="M14.800 14.800L18 18M6.500 9.500H12.500M9.500 6.500V12.500" strokeWidth={2} />
        </Icon>
      </Tool>
      <Tool label="Zoom out">
        <Icon>
          <circle cx="9" cy="9.500" r="7" />
          <path d="M14 14.500L17.500 18M6 9.500H12" strokeWidth={1.6} />
        </Icon>
      </Tool>
      <Divider />
      <Tool label="Fit to window">
        <Icon>
          <path d="M2 6V4Q2 2 4 2H6M14 2H16Q18 2 18 4V6M18 14V16Q18 18 16 18H14M6 18H4Q2 18 2 16V14" strokeWidth={1.2} />
          <circle cx="10" cy="10" r="4.800" strokeWidth={1.2} />
        </Icon>
      </Tool>
      <Divider />
      <Tool label="Rotate right">
        <Icon>
          <rect x="1.500" y="8" width="15" height="10.500" rx="1.500" strokeWidth={1.8} />
          <path d="M7 4.500Q11 0.500 18 4.500M18.500 1.500V5.500H14.500" strokeWidth={1.4} />
        </Icon>
      </Tool>
      <Tool label="Rotate left">
        <Icon>
          <rect x="3.500" y="8" width="15" height="10.500" rx="1" strokeWidth={1.8} />
          <path d="M13 4.500Q9 0.500 2 4.500M5 1L1.500 4.500L5.500 6.500" strokeWidth={1.4} />
        </Icon>
      </Tool>
      <Divider />
      <Tool label="Paint">
        <Icon>
          <path d="M2.500 1.500H14.500V6.500H2.500ZM14.500 3H18V8.500L9.500 9.500V12M8 12.500H11V18.500H8Z" />
        </Icon>
      </Tool>
      <Divider />
      <Tool label="Mirror">
        <Icon>
          <path d="M1.500 2L6.500 5V15L1.500 18ZM10 2V18M18.500 2L13.500 5V15L18.500 18Z" strokeWidth={1.3} />
        </Icon>
      </Tool>
      <Tool label="Highlight lamp" active>
        <Icon className="text-[#ff0000]">
          <path d="M10 1V3M1.500 12Q1.500 3.500 10 3.500Q18.500 3.500 18.500 12ZM6.500 12.500Q7 15.500 10 15.500Q13 15.500 13.500 12.500M3 14.500L1.500 16.500M17 14.500L18.500 16.500M6.500 16L5.500 18.500M13.500 16L14.500 18.500M10 17V19" />
        </Icon>
      </Tool>
      <Tool label="3D view">3D</Tool>
      <Tool label="Diode mode" active>
        <svg width="24" height="20" viewBox="0 0 24 20" aria-hidden="true">
          <path d="M8 4L18 10L8 16Z" fill="#4a90fb" />
          <path d="M0 10H24M19.500 4V16" stroke="#4a90fb" strokeWidth="1.300" />
        </svg>
      </Tool>
      <Tool label="Net colours" active>
        <Icon>
          <rect x="0.750" y="0.750" width="18.500" height="18.500" rx="2" strokeWidth={1.1} />
          <g strokeWidth={1.1}>
            <path d="M7 7L18 18" stroke="#10b418" />
            <circle cx="6" cy="5.800" r="1.500" stroke="#10b418" />
            <circle cx="12.500" cy="4" r="1.500" stroke="#3a8cff" />
            <path d="M14 5Q16.500 5 16.500 8V11" stroke="#3a8cff" />
            <circle cx="3.800" cy="11" r="1.500" stroke="#ff1a1a" />
            <path d="M5 12.500Q8 13 8.500 15L11 18" stroke="#ff1a1a" />
          </g>
        </Icon>
      </Tool>
      <Tool label="Route">
        <Icon>
          <circle cx="16.500" cy="3.500" r="2" />
          <circle cx="3" cy="17" r="2" />
          <path d="M14.500 4Q5 5 3.500 15" strokeWidth={1.6} />
        </Icon>
      </Tool>
      <Divider />
      <Tool label="Mouse settings">
        <Icon>
          <rect x="4" y="2" width="12" height="16" rx="5" />
          <path d="M4 9H16M10 2V5" />
          <rect x="8.500" y="5" width="3" height="6" rx="1.500" fill="#fafafa" />
        </Icon>
      </Tool>
      <Divider />
      <div className="flex h-5 w-[230px] items-center rounded-[3px] border border-[#dcdcdc] bg-white pr-1 pl-0.5">
        <input
          aria-label="Component or net name"
          placeholder="Enter the component or net name to search"
          className="min-w-0 flex-1 bg-transparent font-['Noto_Sans',sans-serif] text-xs outline-none placeholder:text-[#bdc2c9]"
        />
        <button aria-label="Show history" className="pl-2.5">
          <Chevron />
        </button>
      </div>
      <Tool label="Search component">
        <Icon>
          <circle cx="9.500" cy="9.500" r="7.500" strokeWidth={1.6} />
          <path d="M15 15L18 18.500" strokeWidth={1.6} />
        </Icon>
      </Tool>
      <Divider />
      <button className="ml-0.5 h-[22px] border border-[#ff0000] px-[5px] text-sm leading-5 text-black">[ColorScheme]</button>
      <Divider />
      <Tool label="Visibility">
        <Icon className="text-[#3a7fe0]">
          <path d="M1 10Q5 3.500 10 3.500Q15 3.500 19 10Q15 16.500 10 16.500Q5 16.500 1 10Z" strokeWidth={1.2} />
          <circle cx="10" cy="10" r="4.200" strokeWidth={1.2} />
          <path d="M8.500 11.500L11.500 8.500" />
          <circle cx="10" cy="10" r="1.800" strokeWidth={0.9} />
        </Icon>
      </Tool>
      <button aria-label="Side panel" className="ml-auto">
        <svg width="22" height="19" viewBox="0 0 22 19" fill="none" stroke="#757575" aria-hidden="true">
          <path d="M1 1H21V18H1Z" strokeWidth="2" />
          <path d="M7.500 1V18" strokeWidth="1.500" />
          <path d="M11 5.500H17M12 8.200H17M11 11H17M11 13.800H17" strokeWidth="1.200" />
        </svg>
      </button>
    </div>
  );
}

/* ---------- page ---------- */

export default function App() {
  const [query, setQuery] = useState("");
  return (
    <div className="flex h-screen flex-col overflow-hidden bg-white font-['Open_Sans','Noto_Sans',sans-serif] text-sm text-[#111]">
      <header className="flex h-10 shrink-0 items-center bg-linear-to-r from-[#1fa2f8] via-[#3076ff] via-20% to-[#2a9dff] pr-4 pl-3 text-white">
        <svg width="25" height="30" viewBox="0 0 25 30" aria-hidden="true">
          <g fill="none" stroke="#8fc6ff" strokeWidth="0.900" strokeDasharray="3 1.500">
            <circle cx="12.500" cy="15" r="6.500" />
          </g>
          <path d="M12.500 0L14.800 8.500L13.600 12.500H11.400L10.200 8.500ZM12.500 30L14.800 21.500L13.600 17.500H11.400L10.200 21.500ZM0 15L7 13.500L10.500 14.300V15.700L7 16.500ZM25 15L18 13.500L14.500 14.300V15.700L18 16.500Z" fill="#fff" />
          <circle cx="12.500" cy="15" r="1.500" fill="#fff" />
        </svg>
        <h1 className="ml-[13px] flex-1 pt-0.5 text-sm">XZZ Schematics V4.77 [ VIP Due date: 2025-10-30 17:50:47 ]</h1>
        <button aria-label="Toolbox">
          <Icon size={18} className="text-[#e3e63a]">
            <rect x="1.500" y="5.500" width="17" height="13" rx="2" />
            <path d="M6 5V3Q6 1.500 7.500 1.500H12.500Q14 1.500 14 3V5M2 9H18M6 11.500H14" />
          </Icon>
        </button>
        <span className="mr-3 ml-2.5 h-5 w-px bg-white/40" />
        <button aria-label="Minimize">
          <Icon size={18} className="text-white">
            <path d="M1 10H19" strokeWidth={2} />
          </Icon>
        </button>
        <button aria-label="Maximize" className="mx-3">
          <Icon size={18} className="text-white">
            <rect x="1.500" y="1.500" width="17" height="17" rx="3.500" strokeWidth={1.6} />
          </Icon>
        </button>
        <button aria-label="Close">
          <Icon size={18} className="text-white">
            <path d="M1.500 1.500L18.500 18.500M18.500 1.500L1.500 18.500" strokeWidth={1.8} />
          </Icon>
        </button>
      </header>

      <nav className="flex h-8 shrink-0 items-center gap-4 border-b border-[#dadada] bg-[#f0f0f0] pt-0.5 pl-[18px]">
        {["File(F)", "VIP(V)", "Tool(T)", "Settings(S)", "PCB View settings(S)"].map((m) => (
          <button key={m} className="text-[15px] text-black">
            {m}
          </button>
        ))}
      </nav>

      <div className="flex min-h-0 flex-1">
        <aside className="flex w-[431px] shrink-0 flex-col border-r border-[#dadada]">
          <div className="flex h-10 shrink-0 items-center border-b border-[#dadada] pr-[5px] pl-[5px]">
            <button className="h-[30px] w-[49px] rounded-[3px] border border-[#dcdcdc] text-sm text-black">Shrink</button>
            <div className="ml-2.5 flex h-[30px] flex-1 items-center rounded-[3px] border border-[#dcdcdc] px-2">
              <input
                aria-label="Model number or PCB"
                value={query}
                onChange={(e) => setQuery(e.target.value)}
                placeholder="Please input the model number or PCB"
                className="min-w-0 flex-1 bg-transparent text-sm outline-none placeholder:text-[#bdc2c9]"
              />
              <button aria-label="Show suggestions" className="pr-px pl-2">
                <Chevron />
              </button>
            </div>
            <button aria-label="Search" className="ml-2.5 flex h-[30px] w-[49px] items-center justify-center rounded-[3px] bg-[#4a90ff]">
              <Icon className="text-white">
                <circle cx="10" cy="10" r="8.200" strokeWidth={1.5} />
                <path d="M16 16L18 18.500" strokeWidth={1.5} />
              </Icon>
            </button>
          </div>
          <div className="flex min-h-0 flex-1">
            <div className="w-[74px] shrink-0 overflow-hidden">
              <fieldset className="mx-[9px] rounded-lg border-2 border-dashed border-[#2f9cf8] pb-[3px]">
                <legend className="mx-auto h-5 text-sm leading-5 text-[#3a97f7]">VIP</legend>
                <Category icon="course" label="Cour..." />
                <Category icon="phone" label="Phone" active />
                <Category icon="computer" label="Com..." />
              </fieldset>
              <fieldset className="mx-[9px] mt-[25px] rounded-lg border-2 border-dashed border-[#6a7084] pb-[3px]">
                <legend className="mx-auto h-5 text-sm leading-5 text-[#6a7084]">Custom</legend>
                <Category icon="drone" label="Drone" />
                <Category icon="game" label="Gam..." />
                <Category icon="car" label="Car" />
              </fieldset>
              <div className="mt-2.5">
                <Category icon="star" label="Favorites" />
              </div>
            </div>
            <FileTree />
          </div>
        </aside>

        <div className="w-[9px] shrink-0 bg-[#fafffa]">
          <DrawerHandle side="left" label="Collapse file list" />
        </div>

        <main className="flex min-w-0 flex-1 flex-col border-l border-[#dadada]">
          <div className="flex h-[34px] shrink-0 items-center gap-[5px] border-b border-[#dadada] bg-[#fafafa] pr-2.5 pl-2">
            <button className="flex h-6 items-center gap-1 rounded-[3px] border border-[#777] bg-white px-1.5 text-[#777]">
              <Icon size={18} className="text-black">
                <path d="M1 10L10 1.500L19 10M3.500 8.500V18.500H16.500V8.500" strokeWidth={1.7} />
                <path d="M8 18V12.500H12V18" strokeWidth={1.5} />
              </Icon>
              Member Center
            </button>
            <button className="h-6 rounded-[3px] border border-black bg-white px-2 text-[15px] leading-5 font-bold text-black">
              honor 30 Youth-HN1DVCMVD YiDianTong.pcb
            </button>
            <button aria-label="Close all tabs" className="ml-auto">
              <svg width="19" height="19" viewBox="0 0 19 19" aria-hidden="true">
                <path d="M1.500 15V3Q1.500 1.500 3 1.500H15" fill="none" stroke="#808080" strokeWidth="2" />
                <rect x="4.500" y="4.500" width="14" height="14" rx="2" fill="#808080" />
                <path d="M8.500 8.500L14.500 14.500M14.500 8.500L8.500 14.500" stroke="#fff" strokeWidth="1.600" />
              </svg>
            </button>
          </div>
          <div className="flex min-h-0 flex-1">
            <div className="flex min-w-0 flex-1 flex-col">
              <Toolbar />
              <div className="min-h-0 flex-1 bg-white">
                <PcbBoard />
              </div>
            </div>
            <div className="w-2.5 shrink-0 border-l border-[#dadada] bg-[#fafafa]">
              <DrawerHandle side="right" label="Expand side panel" />
            </div>
          </div>
        </main>
      </div>

      <footer className="flex h-5 shrink-0 items-center justify-center bg-[#0090da] font-['DejaVu_Sans_Mono',monospace] text-[15px] text-white">
        XZZ Schematics https://www.xzztools.com
      </footer>
    </div>
  );
}
